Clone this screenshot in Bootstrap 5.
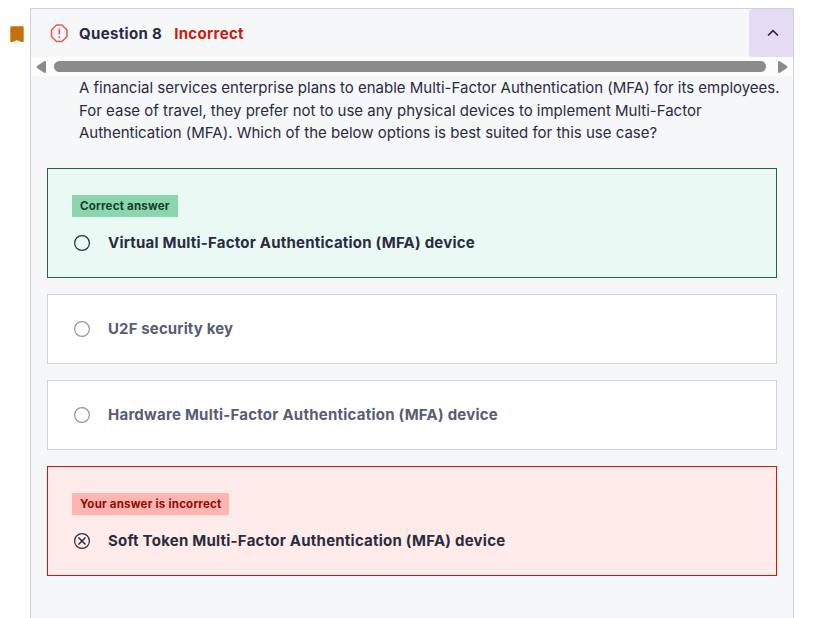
<!DOCTYPE html>
<html lang="en">
<head>
<meta charset="utf-8">
<meta name="viewport" content="width=device-width, initial-scale=1">
<title>Question 8</title>
<link href="https://cdn.jsdelivr.net/npm/bootstrap@5.3.0/dist/css/bootstrap.min.css" rel="stylesheet">
<style>
body{font-family:Inter,"Liberation Sans",sans-serif;color:#2a2b3f;font-size:15px;line-height:22.4px;height:618px}
.page{height:618px}
.marker{width:30px;padding:26px 0 0 10px}
.panel{width:764px;margin-top:8px;background:#f6f7f9;border:1px solid #d1d2e0;border-bottom:0}
.head{height:48px;padding-left:19px}
.title{font-size:15px;margin-left:10px;padding-top:2px;letter-spacing:.34px}
.status{color:#d0190c;font-size:15px;margin-left:12px;padding-top:2px;letter-spacing:.33px}
.toggle{width:44px;height:48px;border:0;background:#e5dcf4;border-radius:4px 0 0 4px}
.toggle svg{margin-left:4px}
.scroller{height:19px;background:#fcfcfc;padding:0 5px}
.thumb{height:11px;background:#8b8b8b;margin:0 12px 0 8px}
.prompt{padding:1.4px 0 0 48px;margin-bottom:23.4px;letter-spacing:-.005px}
.answer{border:1px solid #d1d2e0;background:#fff;height:70px;padding:0 24px;color:#595c73;font-weight:700;font-size:15px;letter-spacing:.235px}
.answer svg{stroke:#9194ac}
.answer.brief{letter-spacing:.13px}
.answer.tall{height:110px;padding-top:3.4px;color:#2a2b3f}
.answer.tall svg{stroke:#2a2b3f}
.answer.right{background:#eaf9f4;border-color:#206241;letter-spacing:.215px}
.answer.wrong{background:#ffebe9;border-color:#d0190c}
.tag{font-size:11.5px;line-height:22px;height:22px;padding:0 8px;margin-bottom:15px;letter-spacing:.215px}
.right .tag{background:#8bd5af;color:#153d2b}
.wrong .tag{background:#ffb6b0;color:#8f0a02}
</style>
<script src="https://cdn.jsdelivr.net/npm/bootstrap@5.3.0/dist/js/bootstrap.bundle.min.js"></script>
</head>
<body class="overflow-hidden bg-white">
<main class="page d-flex overflow-hidden">
  <div class="marker flex-shrink-0">
    <svg class="d-block" width="14" height="17" viewBox="0 0 14 17"><path d="M1.500.3h11q1.200 0 1.200 1.200v14.500H11.500L7 14.300l-4.500 1.700H.3V1.500Q.3.3 1.500.3Z" fill="#c4710d"/></svg>
  </div>
  <section class="panel flex-shrink-0">
    <header class="head d-flex align-items-center">
      <svg width="19" height="19" viewBox="0 0 19 19" fill="none" stroke="#f9564a" stroke-width="1.500"><path d="M6.500 1h5.500l5 5v6.500l-5 5H6.500l-5-5V6z" stroke-linejoin="round"/><path d="M9.250 4.500v6M9.250 12.200v1.700"/></svg>
      <span class="title fw-bold">Question 8</span>
      <span class="status fw-bold">Incorrect</span>
      <button class="toggle ms-auto p-0 d-flex align-items-center justify-content-center" type="button" aria-label="Collapse">
        <svg width="14" height="10" viewBox="0 0 14 10" fill="none" stroke="#2a2b3f" stroke-width="1.700"><path d="M2 7.500 7 2.700l5 4.800"/></svg>
      </button>
    </header>
    <div class="scroller d-flex align-items-center">
      <svg width="10" height="12" viewBox="0 0 10 12" fill="#8b8b8b"><path d="M8.500 0Q10 0 10 1v10q0 1-1.500 1L1 7Q0 6 1 5z"/></svg>
      <div class="thumb flex-grow-1 rounded-pill"></div>
      <svg width="10" height="12" viewBox="0 0 10 12" fill="#8b8b8b"><path d="M1.500 0Q0 0 0 1v10q0 1 1.500 1L9 7q1-1 0-2z"/></svg>
    </div>
    <div class="prompt text-nowrap">
      A financial services enterprise plans to enable Multi-Factor Authentication (MFA) for its employees.<br>
      For ease of travel, they prefer not to use any physical devices to implement Multi-Factor<br>
      Authentication (MFA). Which of the below options is best suited for this use case?
    </div>
    <div class="d-flex flex-column gap-3 px-3">
      <div class="answer right tall d-flex flex-column align-items-start justify-content-center">
        <span class="tag">Correct answer</span>
        <div class="d-flex align-items-center">
          <svg width="20" height="20" viewBox="0 0 20 20" fill="none"><circle cx="10" cy="10" r="7.400" stroke-width="1.200"/></svg>
          <span class="ms-3">Virtual Multi-Factor Authentication (MFA) device</span>
        </div>
      </div>
      <div class="answer brief d-flex align-items-center">
        <svg width="20" height="20" viewBox="0 0 20 20" fill="none"><circle cx="10" cy="10" r="7.400" stroke-width="1.200"/></svg>
        <span class="ms-3">U2F security key</span>
      </div>
      <div class="answer d-flex align-items-center">
        <svg width="20" height="20" viewBox="0 0 20 20" fill="none"><circle cx="10" cy="10" r="7.400" stroke-width="1.200"/></svg>
        <span class="ms-3">Hardware Multi-Factor Authentication (MFA) device</span>
      </div>
      <div class="answer wrong tall d-flex flex-column align-items-start justify-content-center">
        <span class="tag">Your answer is incorrect</span>
        <div class="d-flex align-items-center">
          <svg width="20" height="20" viewBox="0 0 20 20" fill="none"><circle cx="10" cy="10" r="7.400" stroke-width="1.200"/><path d="m6.500 6.500 7 7m0-7-7 7" stroke-width="1.500"/></svg>
          <span class="ms-3">Soft Token Multi-Factor Authentication (MFA) device</span>
        </div>
      </div>
    </div>
  </section>
</main>
</body>
</html>
